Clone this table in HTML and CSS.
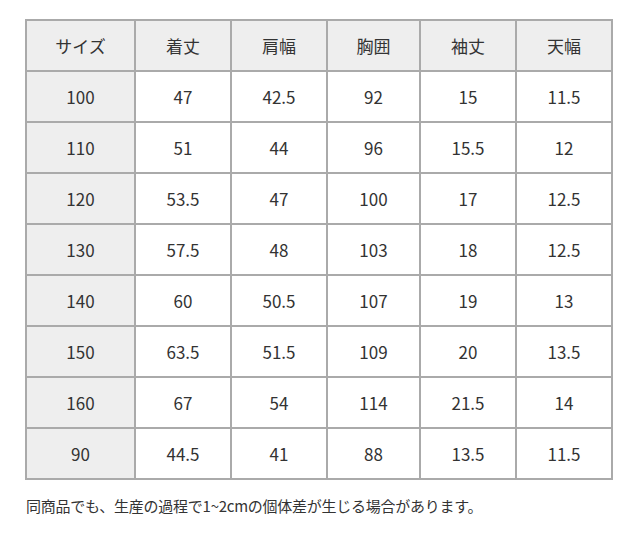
FILE: index.html
```html
<!DOCTYPE html>
<html lang="ja">
<head>
<meta charset="utf-8">
<link rel="stylesheet" href="styles.css">
</head>
<body>
<div class="wrap">
<table class="size">
<colgroup>
<col class="c1"><col class="c2"><col class="c3"><col class="c4"><col class="c5"><col class="c6">
</colgroup>
<thead>
<tr><th>サイズ</th><th>着丈</th><th>肩幅</th><th>胸囲</th><th>袖丈</th><th>天幅</th></tr>
</thead>
<tbody>
<tr><th>100</th><td>47</td><td>42.5</td><td>92</td><td>15</td><td>11.5</td></tr>
<tr><th>110</th><td>51</td><td>44</td><td>96</td><td>15.5</td><td>12</td></tr>
<tr><th>120</th><td>53.5</td><td>47</td><td>100</td><td>17</td><td>12.5</td></tr>
<tr><th>130</th><td>57.5</td><td>48</td><td>103</td><td>18</td><td>12.5</td></tr>
<tr><th>140</th><td>60</td><td>50.5</td><td>107</td><td>19</td><td>13</td></tr>
<tr><th>150</th><td>63.5</td><td>51.5</td><td>109</td><td>20</td><td>13.5</td></tr>
<tr><th>160</th><td>67</td><td>54</td><td>114</td><td>21.5</td><td>14</td></tr>
<tr><th>90</th><td>44.5</td><td>41</td><td>88</td><td>13.5</td><td>11.5</td></tr>
</tbody>
</table>
<p class="note">同商品でも、生産の過程で1~2cmの個体差が生じる場合があります。</p>
</div>
</body>
</html>
```
FILE: styles.css
```css
html, body {
  margin: 0;
  padding: 0;
  background: #fff;
}
body {
  font-family: "Noto Sans CJK JP", "Noto Sans", sans-serif;
  color: #333;
}
.wrap {
  padding: 19px 0 0 25px;
}
.size {
  border-collapse: collapse;
  table-layout: fixed;
  width: 588px;
}
.c1 { width: 109px; }
.c2 { width: 96px; }
.c3 { width: 96px; }
.c4 { width: 93px; }
.c5 { width: 96px; }
.c6 { width: 96px; }
.size th, .size td {
  border: 2px solid #aaa;
  height: 49px;
  padding: 0;
  text-align: center;
  vertical-align: middle;
  font-size: 17px;
  font-weight: normal;
  line-height: 1;
}
.size thead th {
  background: #eee;
}
.size tbody th {
  background: #eee;
}
.size td {
  background: #fff;
}
.note {
  margin: 16px 0 0 1px;
  font-size: 15px;
  letter-spacing: -0.25px;
  line-height: 20px;
  color: #333;
}
```
